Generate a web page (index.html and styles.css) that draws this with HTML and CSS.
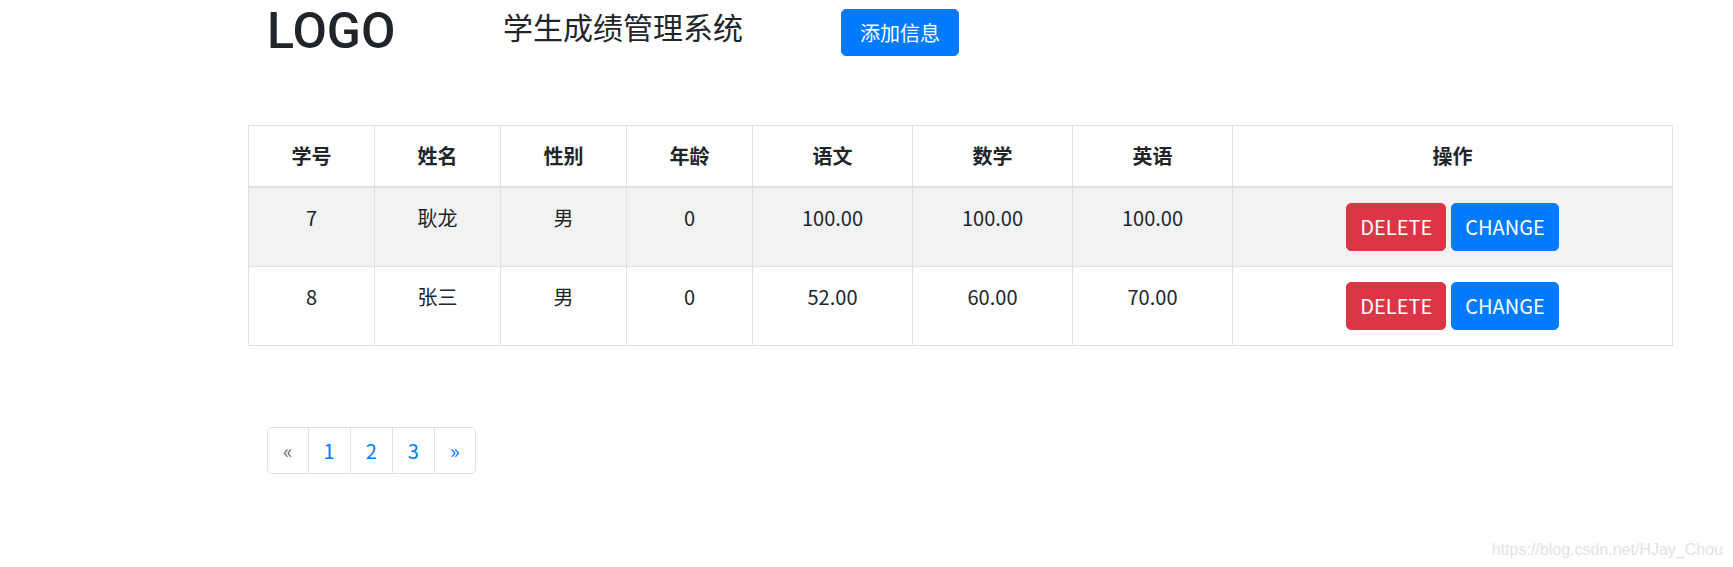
FILE: index.html
```html
<!DOCTYPE html>
<html lang="zh-CN">
<head>
<meta charset="utf-8">
<title>学生成绩管理系统</title>
<link rel="stylesheet" href="styles.css">
</head>
<body>
<div class="page">
  <header class="topbar">
    <h1 class="logo">LOGO</h1>
    <h2 class="title">学生成绩管理系统</h2>
    <button class="btn btn-primary btn-add">添加信息</button>
  </header>

  <table class="grid">
    <colgroup>
      <col class="c-narrow"><col class="c-narrow"><col class="c-narrow"><col class="c-narrow">
      <col class="c-mid"><col class="c-mid"><col class="c-mid">
      <col class="c-wide">
    </colgroup>
    <thead>
      <tr>
        <th>学号</th><th>姓名</th><th>性别</th><th>年龄</th><th>语文</th><th>数学</th><th>英语</th><th>操作</th>
      </tr>
    </thead>
    <tbody>
      <tr class="striped">
        <td>7</td><td>耿龙</td><td>男</td><td>0</td><td>100.00</td><td>100.00</td><td>100.00</td>
        <td><div class="actions"><button class="btn btn-danger">DELETE</button><button class="btn btn-primary">CHANGE</button></div></td>
      </tr>
      <tr>
        <td>8</td><td>张三</td><td>男</td><td>0</td><td>52.00</td><td>60.00</td><td>70.00</td>
        <td><div class="actions"><button class="btn btn-danger">DELETE</button><button class="btn btn-primary">CHANGE</button></div></td>
      </tr>
    </tbody>
  </table>

  <nav class="pager">
    <span class="page-link disabled">«</span>
    <a class="page-link" href="#">1</a>
    <a class="page-link" href="#">2</a>
    <a class="page-link" href="#">3</a>
    <a class="page-link" href="#">»</a>
  </nav>
</div>
<div class="watermark">https://blog.csdn.net/HJay_Chou</div>
</body>
</html>
```
FILE: styles.css
```css
* { box-sizing: border-box; }

html, body {
  margin: 0;
  padding: 0;
  background: #fff;
}

body {
  font-family: "Noto Sans CJK SC", "Noto Sans", sans-serif;
  font-size: 20px;
  color: #212529;
  height: 567px;
  overflow: hidden;
  position: relative;
}

.page {
  padding-left: 248px;
}

.topbar {
  display: flex;
  align-items: flex-start;
  padding-left: 19px;
  height: 60px;
  margin-bottom: 65px;
}

.logo {
  flex: none;
  width: 236px;
  margin: 1px 0 0;
  font-family: Roboto, "Noto Sans CJK SC", sans-serif;
  font-size: 50px;
  line-height: 60px;
  font-weight: 500;
  color: #212529;
}

.title {
  flex: none;
  margin: 11px 0 0;
  font-size: 30px;
  line-height: 30px;
  font-weight: 400;
  width: 240px;
}

.btn {
  font-family: inherit;
  font-size: 20px;
  line-height: 28px;
  color: #fff;
  border: 1px solid transparent;
  border-radius: 5px;
  padding: 0 13px;
  height: 48px;
  cursor: pointer;
}

.btn-primary { background: #007bff; border-color: #007bff; }
.btn-danger { background: #dc3545; border-color: #dc3545; }

.btn-add {
  margin: 9px 0 0 98px;
  height: 47px;
  padding: 0 18px;
}

.grid {
  width: 1424px;
  border-collapse: collapse;
  table-layout: fixed;
}

.c-narrow { width: 126px; }
.c-mid { width: 160px; }
.c-wide { width: 440px; }

.grid th,
.grid td {
  border: 1px solid #dee2e6;
  padding: 15px;
  line-height: 30px;
  text-align: center;
  vertical-align: top;
}

.grid th {
  font-weight: 700;
  border-bottom-width: 2px;
}

.grid tr.striped td {
  background: #f2f2f2;
}

.actions {
  display: flex;
  justify-content: center;
  gap: 5px;
}

.pager {
  display: flex;
  margin: 81px 0 0 19px;
}

.page-link {
  display: block;
  padding: 10px 15px;
  line-height: 25px;
  font-size: 20px;
  color: #007bff;
  text-decoration: none;
  border: 1px solid #dee2e6;
  margin-left: -1px;
  background: #fff;
}

.page-link:first-child {
  margin-left: 0;
  border-radius: 5px 0 0 5px;
}

.page-link:last-child {
  border-radius: 0 5px 5px 0;
}

.page-link.disabled {
  color: #6c757d;
}

.watermark {
  position: absolute;
  right: 10px;
  bottom: 9px;
  font-family: "Liberation Sans", Arial, sans-serif;
  font-size: 16px;
  line-height: 16px;
  color: #e3e3e3;
}
```
